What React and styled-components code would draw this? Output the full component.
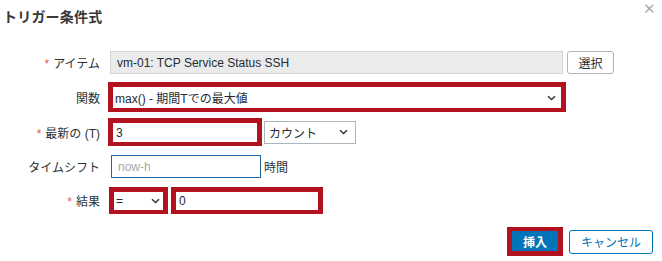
import React from 'react'
import styled, { createGlobalStyle } from 'styled-components'

const GlobalStyle = createGlobalStyle`
  html, body {
    margin: 0;
    padding: 0;
    background: #fff;
  }
  body {
    font-family: "Liberation Sans", "Noto Sans CJK JP", Arial, sans-serif;
    font-size: 12px;
    color: #1f2c33;
  }
`

const RED = '#b2121d'
const BLUE = '#0275b8'

const Dialog = styled.div`
  width: 662px;
  height: 261px;
  box-sizing: border-box;
  display: flex;
  flex-direction: column;
`

const Header = styled.div`
  height: 32px;
  display: flex;
  align-items: center;
  justify-content: space-between;
  padding: 0 6px 0 3px;
`

const Title = styled.h4`
  margin: 0;
  font-size: 14px;
  font-weight: bold;
  color: #383838;
  letter-spacing: 0.2px;
`

const Close = styled.span`
  align-self: flex-start;
  margin-top: 1px;
  font-size: 15px;
  line-height: 15px;
  color: #a8aeb3;
`

const Form = styled.div`
  display: flex;
  flex-direction: column;
  margin-top: 19px;
`

const Row = styled.div`
  display: flex;
  align-items: center;
  height: ${p => p.$h}px;
  margin-top: ${p => p.$mt || 0}px;
`

const Label = styled.label`
  width: 100px;
  flex: none;
  text-align: right;
  margin-right: 8px;
  color: #2b3338;
  white-space: nowrap;
`

const Req = styled.span`
  color: #e45959;
  margin-right: 4px;
`

const Fields = styled.div`
  display: flex;
  align-items: center;
  gap: ${p => p.$gap || 0}px;
  margin-left: ${p => p.$ml || 0}px;
`

const TextInput = styled.input`
  box-sizing: border-box;
  width: ${p => p.$w}px;
  height: ${p => p.$h || 23}px;
  padding: 0 6px;
  font: inherit;
  color: #1f2c33;
  background: ${p => (p.readOnly && p.$gray ? '#ebebeb' : '#fff')};
  border: 1px solid ${p => p.$border || '#cfd4d7'};
  border-radius: 0;
  outline: none;
  margin: 0;
  &::placeholder {
    color: #a3a8ab;
  }
`

const RedFrame = styled.div`
  box-sizing: border-box;
  width: ${p => p.$w}px;
  height: ${p => p.$h}px;
  border: 5px solid ${RED};
  border-width: 5px 5px 4px 5px;
  background: #fff;
  display: flex;
  align-items: center;
`

const SelectBox = styled.div`
  box-sizing: border-box;
  flex: ${p => (p.$w ? 'none' : '1')};
  width: ${p => (p.$w ? `${p.$w}px` : 'auto')};
  height: ${p => p.$h || 23}px;
  display: flex;
  align-items: center;
  justify-content: space-between;
  padding: 0 ${p => p.$pr || 6}px 0 ${p => p.$pl || 4}px;
  border: ${p => (p.$bare ? 'none' : '1px solid #aab5bc')};
  background: #fff;
  color: #1f2c33;
  white-space: nowrap;
`

const FrameText = styled.span`
  padding-left: ${p => p.$pl || 3}px;
  color: #1f2c33;
`

const Btn = styled.button`
  box-sizing: border-box;
  height: ${p => p.$h || 23}px;
  padding: 0 ${p => p.$px || 10}px;
  font: inherit;
  font-weight: ${p => (p.$primary ? 'bold' : 'normal')};
  color: ${p => (p.$primary ? '#fff' : p.$outline ? BLUE : '#1f2c33')};
  background: ${p => (p.$primary ? BLUE : '#fff')};
  border: 1px solid ${p => (p.$primary ? BLUE : p.$outline ? BLUE : '#aab5bc')};
  border-radius: ${p => (p.$primary ? 0 : 3)}px;
  cursor: pointer;
  margin: 0;
`

const Unit = styled.span`
  margin-left: 3px;
  color: #2b3338;
`

const Footer = styled.div`
  display: flex;
  justify-content: flex-end;
  align-items: center;
  gap: 6px;
  margin-top: 13px;
  padding-right: 9px;
`

const RedWrap = styled.div`
  box-sizing: border-box;
  border: 5px solid ${RED};
  border-width: 4px 5px 5px 5px;
  display: flex;
`

const Chevron = () => (
  <svg width="9" height="6" viewBox="0 0 9 6">
    <path d="M1 1.2 L4.5 4.6 L8 1.2" fill="none" stroke="#2b3338" strokeWidth="1.4" />
  </svg>
)

export default function App() {
  return (
    <Dialog>
      <GlobalStyle />
      <Header>
        <Title>トリガー条件式</Title>
        <Close>✕</Close>
      </Header>
      <Form>
        <Row $h={23}>
          <Label><Req>*</Req>アイテム</Label>
          <Fields $gap={4} $ml={2}>
            <TextInput $w={453} $gray readOnly value="vm-01: TCP Service Status SSH" />
            <Btn $px={10} style={{ width: 47 }}>選択</Btn>
          </Fields>
        </Row>
        <Row $h={30} $mt={8}>
          <Label>関数</Label>
          <RedFrame $w={458} $h={30}>
            <SelectBox $bare $h={21} $pl={2} $pr={5}>
              <span>max() - 期間Tでの最大値</span>
              <Chevron />
            </SelectBox>
          </RedFrame>
        </Row>
        <Row $h={28} $mt={6}>
          <Label><Req>*</Req>最新の (T)</Label>
          <Fields $gap={2}>
            <RedFrame $w={154} $h={28}>
              <FrameText>3</FrameText>
            </RedFrame>
            <SelectBox $w={92} $h={23} $pl={4} $pr={7}>
              <span>カウント</span>
              <Chevron />
            </SelectBox>
          </Fields>
        </Row>
        <Row $h={23} $mt={9}>
          <Label>タイムシフト</Label>
          <Fields $ml={3}>
            <TextInput $w={150} $border="#1f65a5" placeholder="now-h" />
            <Unit>時間</Unit>
          </Fields>
        </Row>
        <Row $h={27} $mt={9}>
          <Label><Req>*</Req>結果</Label>
          <Fields $gap={3} $ml={1}>
            <RedFrame $w={59} $h={27}>
              <SelectBox $bare $h={18} $pl={2} $pr={3}>
                <span>=</span>
                <Chevron />
              </SelectBox>
            </RedFrame>
            <RedFrame $w={152} $h={27}>
              <FrameText $pl={3}>0</FrameText>
            </RedFrame>
          </Fields>
        </Row>
      </Form>
      <Footer>
        <RedWrap>
          <Btn $primary $h={20} $px={0} style={{ width: 46 }}>挿入</Btn>
        </RedWrap>
        <Btn $outline $h={24} $px={0} style={{ width: 84 }}>キャンセル</Btn>
      </Footer>
    </Dialog>
  )
}
